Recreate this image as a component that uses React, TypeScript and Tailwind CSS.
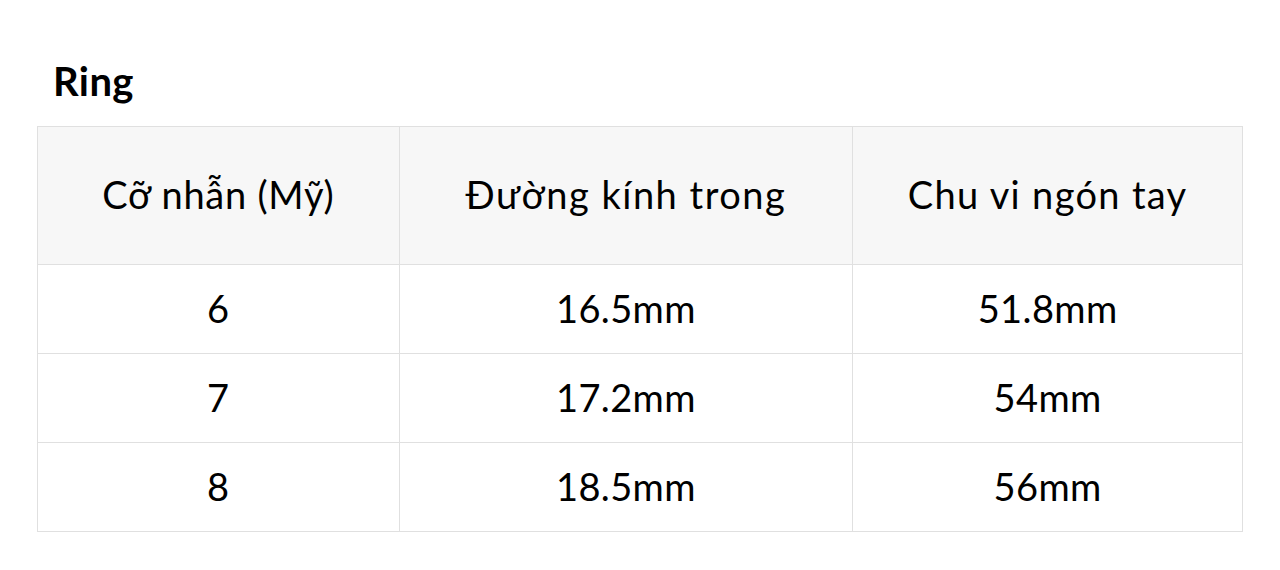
const rows = [
  ["6", "16.5mm", "51.8mm"],
  ["7", "17.2mm", "54mm"],
  ["8", "18.5mm", "56mm"],
];

export default function App() {
  return (
    <div className="min-h-screen bg-white text-black">
      <div className="px-[37px] pt-[57px]" style={{ fontFamily: "Lato, 'Noto Sans', sans-serif" }}>
        <h2 className="pl-4 text-[40px] font-bold leading-[48px] mb-[21px] tracking-[0.01em]">Ring</h2>
        <table className="w-[1206px] border-collapse border border-[#e0e0e0] text-[38px] text-center">
          <colgroup>
            <col className="w-[362px]" />
            <col className="w-[454px]" />
            <col className="w-[390px]" />
          </colgroup>
          <thead>
            <tr className="h-[138px] bg-[#f7f7f7]">
              <th className="border border-[#e0e0e0] font-normal tracking-[0.02em] pb-[2px]">Cỡ nhẫn (Mỹ)</th>
              <th className="border border-[#e0e0e0] font-normal tracking-[0.04em] pb-[2px]">Đường kính trong</th>
              <th className="border border-[#e0e0e0] font-normal tracking-[0.035em] pb-[2px]">Chu vi ngón tay</th>
            </tr>
          </thead>
          <tbody>
            {rows.map((r) => (
              <tr key={r[0]} className="h-[89px]">
                {r.map((c, i) => (
                  <td key={i} className="border border-[#e0e0e0] tracking-[0.01em] pb-[2px]">{c}</td>
                ))}
              </tr>
            ))}
          </tbody>
        </table>
      </div>
    </div>
  );
}
